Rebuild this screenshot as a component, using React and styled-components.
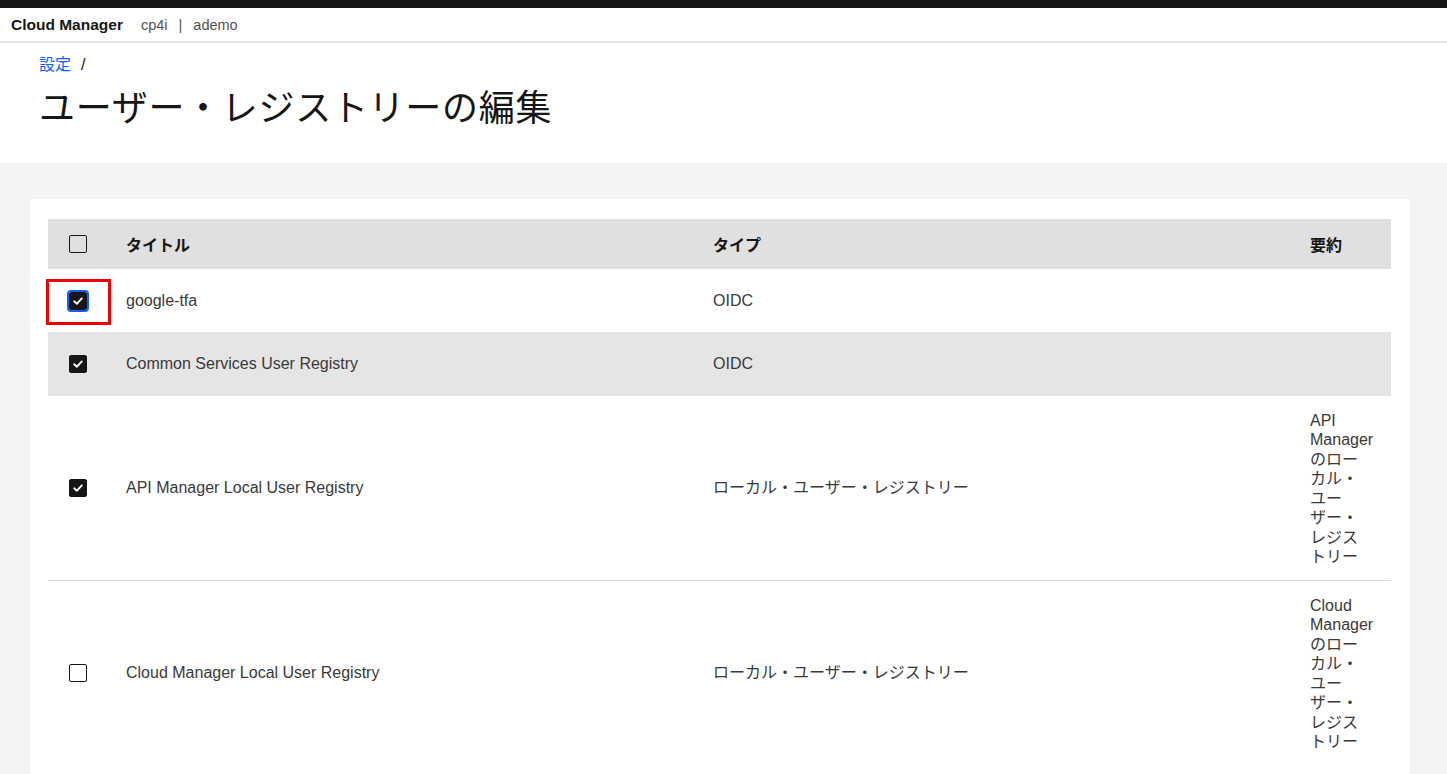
import React from "react";
import styled, { createGlobalStyle, css } from "styled-components";

const GlobalStyle = createGlobalStyle`
  html, body {
    margin: 0;
    padding: 0;
    overflow: hidden;
    background: #ffffff;
  }
  body {
    font-family: "Liberation Sans", "Noto Sans CJK JP", sans-serif;
    color: #161616;
  }
  * { box-sizing: border-box; }
`;

const TopStrip = styled.div`
  height: 8px;
  background: #161616;
`;

const Header = styled.header`
  height: 35px;
  display: flex;
  align-items: center;
  padding-left: 11px;
  border-bottom: 2px solid #e4e4e4;
  background: #ffffff;
`;

const Brand = styled.span`
  font-size: 15.5px;
  font-weight: 700;
  color: #161616;
  margin-right: 18px;
`;

const Meta = styled.div`
  display: flex;
  align-items: center;
  gap: 11px;
  font-size: 14.5px;
  color: #525252;
`;

const PageHead = styled.section`
  height: 120px;
  padding: 12px 39px 0;
  background: #ffffff;
`;

const Breadcrumb = styled.nav`
  display: flex;
  align-items: center;
  gap: 10px;
  height: 20px;
  font-size: 16px;
  line-height: 20px;
`;

const CrumbLink = styled.a`
  color: #0f62fe;
  text-decoration: none;
`;

const CrumbSep = styled.span`
  color: #161616;
`;

const Title = styled.h1`
  margin: 8px 0 0;
  font-family: "Noto Sans CJK JP", sans-serif;
  font-size: 36px;
  font-weight: 400;
  letter-spacing: 0.7px;
  line-height: 44px;
  color: #161616;
`;

const Content = styled.main`
  background: #f4f4f4;
  padding: 36px 37px 0 30px;
`;

const Card = styled.div`
  background: #ffffff;
  padding: 20px 19px 30px 18px;
`;

const Table = styled.table`
  width: 100%;
  border-collapse: collapse;
  table-layout: fixed;
`;

const HeadRow = styled.tr`
  background: #e0e0e0;
  height: 50px;
`;

const Th = styled.th`
  text-align: left;
  font-size: 16px;
  font-weight: 700;
  color: #161616;
  padding: 0 16px;
  vertical-align: middle;
  ${(p) => p.$check && css`padding: 0 0 0 21px;`}
`;

const Row = styled.tr`
  background: ${(p) => (p.$hover ? "#e5e5e5" : "#ffffff")};
  border-top: 1px solid #e0e0e0;
  ${(p) => p.$plain && css`border-top-color: #ffffff;`}
`;

const Td = styled.td`
  height: 63px;
  padding: 0 16px;
  font-size: 16px;
  color: #393939;
  vertical-align: middle;
  line-height: 19.5px;
  ${(p) => p.$check && css`padding: 0 0 0 21px;`}
`;

const SummaryTd = styled(Td)`
  padding: 15px 17.5px 13px 16px;
`;

const Chunk = styled.span`
  white-space: nowrap;
`;

const CheckWrap = styled.div`
  position: relative;
  width: 18px;
  height: 18px;
`;

const Box = styled.span`
  display: flex;
  align-items: center;
  justify-content: center;
  width: 18px;
  height: 18px;
  border-radius: 2px;
  border: 1.5px solid #161616;
  background: transparent;
  ${(p) =>
    p.$checked &&
    css`
      background: #161616;
      border-color: #161616;
    `}
  ${(p) =>
    p.$focus &&
    css`
      outline: 2px solid #0f62fe;
      outline-offset: 0;
    `}
`;

const Annotation = styled.div`
  position: absolute;
  left: -23px;
  top: -13px;
  width: 65px;
  height: 46px;
  border: 3px solid #ee0000;
  pointer-events: none;
`;

const Check = ({ checked, focus, annotated }) => (
  <CheckWrap>
    <Box $checked={checked} $focus={focus}>
      {checked && (
        <svg width="12" height="12" viewBox="0 0 12 12">
          <polyline
            points="2.2,6.3 4.8,8.8 9.8,3.4"
            fill="none"
            stroke="#ffffff"
            strokeWidth="1.9"
            strokeLinecap="round"
            strokeLinejoin="round"
          />
        </svg>
      )}
    </Box>
    {annotated && <Annotation />}
  </CheckWrap>
);

const jpTail = ["の", "ロー", "カ", "ル・", "ユー", "ザー・", "レ", "ジ", "ス", "ト", "リー"];

const rows = [
  { title: "google-tfa", type: "OIDC", summary: [], checked: true, focus: true, annotated: true },
  { title: "Common Services User Registry", type: "OIDC", summary: [], checked: true, hover: true },
  {
    title: "API Manager Local User Registry",
    type: "ローカル・ユーザー・レジストリー",
    summary: ["API", " ", "Manager", ...jpTail],
    checked: true,
  },
  {
    title: "Cloud Manager Local User Registry",
    type: "ローカル・ユーザー・レジストリー",
    summary: ["Cloud", " ", "Manager", ...jpTail],
    checked: false,
  },
];

export default function App() {
  return (
    <>
      <GlobalStyle />
      <TopStrip />
      <Header>
        <Brand>Cloud Manager</Brand>
        <Meta>
          <span>cp4i</span>
          <span>|</span>
          <span>ademo</span>
        </Meta>
      </Header>
      <PageHead>
        <Breadcrumb>
          <CrumbLink href="#">設定</CrumbLink>
          <CrumbSep>/</CrumbSep>
        </Breadcrumb>
        <Title>ユーザー・レジストリーの編集</Title>
      </PageHead>
      <Content>
        <Card>
          <Table>
            <colgroup>
              <col style={{ width: 62 }} />
              <col style={{ width: 587 }} />
              <col style={{ width: 597 }} />
              <col />
            </colgroup>
            <thead>
              <HeadRow>
                <Th $check>
                  <Check checked={false} />
                </Th>
                <Th>タイトル</Th>
                <Th>タイプ</Th>
                <Th>要約</Th>
              </HeadRow>
            </thead>
            <tbody>
              {rows.map((r, i) => (
                <Row key={r.title} $hover={r.hover} $plain={i === 0}>
                  <Td $check>
                    <Check checked={r.checked} focus={r.focus} annotated={r.annotated} />
                  </Td>
                  <Td>{r.title}</Td>
                  <Td>{r.type}</Td>
                  <SummaryTd>
                    {r.summary.map((c, j) =>
                      c === " " ? " " : <Chunk key={j}>{c}</Chunk>
                    )}
                  </SummaryTd>
                </Row>
              ))}
            </tbody>
          </Table>
        </Card>
      </Content>
    </>
  );
}
